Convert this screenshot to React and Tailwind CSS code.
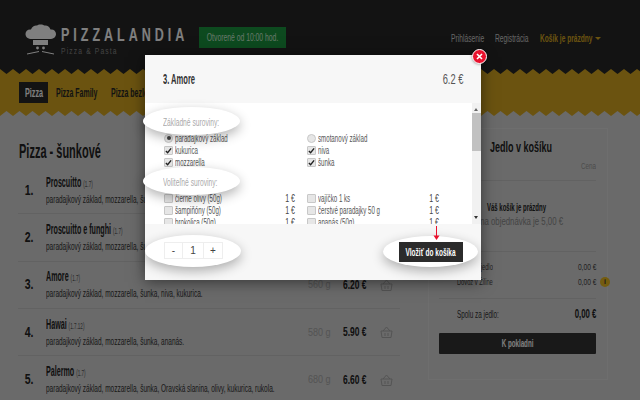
const sans = "font-['Liberation_Sans',Arial,sans-serif]";

const pizzas = [
  { n: "1.", name: "Proscuitto", al: "(1.7)", desc: "paradajkový základ, mozzarella, šunka.", weight: "480 g", price: "4.90 €" },
  { n: "2.", name: "Proscuitto e funghi", al: "(1.7)", desc: "paradajkový základ, mozzarella, šunka, šampiňóny.", weight: "520 g", price: "5.20 €" },
  { n: "3.", name: "Amore", al: "(1.7)", desc: "paradajkový základ, mozzarella, šunka, niva, kukurica.", weight: "560 g", price: "6.20 €" },
  { n: "4.", name: "Hawai", al: "(1.7.12)", desc: "paradajkový základ, mozzarella, šunka, ananás.", weight: "580 g", price: "5.90 €" },
  { n: "5.", name: "Palermo", al: "(1.7)", desc: "paradajkový základ, mozzarella, šunka, Oravská slanina, olivy, kukurica, rukola.", weight: "680 g", price: "6.60 €" },
];

function ChefLogo() {
  return (
    <svg width="31" height="32" viewBox="0 0 31 32" className="shrink-0">
      <path fill="#ffffff" d="M7 15c-4 0-6.500-2-6.500-5S3 5 6 5.500C7 2.500 10 1 12 1.500c1-1.500 6-1.500 7.500 0 2.500-.5 5 1 6 4 3-.5 5.500 1.500 5.500 4.500s-2.500 5-6.500 5z" />
      <path fill="#ffffff" d="M8 16h15v5H8z" />
      <circle cx="12.500" cy="24" r="1.400" fill="#ffffff" />
      <circle cx="18.500" cy="24" r="1.400" fill="#ffffff" />
      <path stroke="#ffffff" strokeWidth="1" fill="none" d="M2 30l12-2.500M29 30l-12-2.500" />
    </svg>
  );
}

function Basket() {
  return (
    <svg width="13" height="12" viewBox="0 0 13 12" fill="none" stroke="#a8a8a8" strokeWidth="1">
      <path d="M1 5h11l-1 6.500H2zM3 5l3.500-4L10 5M5 7v3M8 7v3" />
    </svg>
  );
}

function PizzaRow({ pizza, last }) {
  return (
    <div className={`flex h-[47.300px] items-center ${last ? "" : "border-b border-[#c4c4c4]"}`}>
      <div className="w-[28px] origin-left scale-x-[.75] pl-[9px] text-[14px] font-bold text-[#222]">{pizza.n}</div>
      <div className="w-[262px] shrink-0">
        <div className="origin-left scale-x-[.51] text-[14px] leading-[15px] font-bold whitespace-nowrap text-[#222]">
          {pizza.name} <span className="text-[9px] font-normal text-[#555]">{pizza.al}</span>
        </div>
        <div className="origin-left scale-x-[.59] text-[11px] leading-[14px] whitespace-nowrap text-[#333]">{pizza.desc}</div>
      </div>
      <div className="w-[35px] shrink-0 origin-left scale-x-[.9] text-[10px] text-[#a8a8a8]">{pizza.weight}</div>
      <div className="w-[37px] shrink-0 origin-left scale-x-[.65] text-[13px] font-bold whitespace-nowrap text-[#222]">{pizza.price}</div>
      <div className="w-[20px] shrink-0">
        <Basket />
      </div>
    </div>
  );
}

function CheckBox({ checked, round }) {
  return (
    <span className={`relative flex size-[9px] shrink-0 items-center justify-center border border-[#c8c8c8] bg-[#e6e6e6] ${round ? "rounded-full" : "rounded-[1px]"}`}>
      {checked === "dot" && <span className="size-[4px] rounded-full bg-[#444]" />}
      {checked === true && (
        <svg width="8" height="7" viewBox="0 0 8 7" fill="none" stroke="#222" strokeWidth="1.600">
          <path d="M1 4l2 2 4-5" />
        </svg>
      )}
    </span>
  );
}

function Option({ label, price, checked, round }) {
  return (
    <div className="flex h-[12px] items-center">
      <CheckBox checked={checked} round={round} />
      <span className="ml-[2px] min-w-0 flex-1 origin-left scale-x-[.56] text-[11px] whitespace-nowrap text-[#555]">{label}</span>
      {price && <span className="origin-right scale-x-[.7] text-[10px] text-[#444]">{price}</span>}
    </div>
  );
}

function Spot({ className }) {
  return <div className={`absolute rounded-[50%] bg-white shadow-[0_4px_12px_rgba(0,0,0,0.3)] ${className}`} />;
}

export default function App() {
  return (
    <div className={`relative h-[400px] w-[640px] overflow-hidden bg-[#d4d4d4] ${sans}`}>
      <header className="flex h-[69px] items-start bg-[#262626] pl-[25px]">
        <div className="mt-[24px] flex">
          <ChefLogo />
          <div className="ml-[5px] w-[125px] whitespace-nowrap">
            <div className="origin-left scale-x-[.66] text-[19px] leading-[22px] font-bold tracking-[6px] text-white">PIZZALANDIA</div>
            <div className="origin-left scale-x-[.75] text-[9px] leading-[10px] tracking-[1.500px] text-[#888]">Pizza &amp; Pasta</div>
          </div>
        </div>
        <div className="mt-[27px] ml-[13px] flex h-[21px] w-[87px] items-center justify-center bg-[#1a943e] text-[10px] whitespace-nowrap text-[#cdeed6]">
          <span className="scale-x-[.68]">Otvorené od 10:00 hod.</span>
        </div>
        <nav className="mt-[31px] ml-auto flex items-center gap-[12px] pr-[39px] text-[10px] whitespace-nowrap">
          <span className="w-[32px] origin-left scale-x-[.67] text-[#ccc]">Prihlásenie</span>
          <span className="w-[33px] origin-left scale-x-[.67] text-[#ccc]">Registrácia</span>
          <span className="w-[48px] origin-left scale-x-[.66] font-bold text-[#d6a620]">Košík je prázdny</span>
          <span className="ml-[-5px] size-0 border-x-[3px] border-t-[3px] border-x-transparent border-t-[#d6a620]" />
        </nav>
      </header>

      <div className="relative flex h-[47px] items-center bg-[#d6a620] pl-[19px] text-[12px] font-bold whitespace-nowrap text-[#262626]">
        <svg className="absolute top-0 left-0" width="640" height="5">
          <defs>
            <pattern id="zigTop" width="13" height="5" patternUnits="userSpaceOnUse">
              <path d="M0 0h13L6.500 5z" fill="#262626" />
            </pattern>
            <pattern id="zigBottom" width="13" height="5" patternUnits="userSpaceOnUse">
              <path d="M0 5h13L6.500 0z" fill="#d4d4d4" />
            </pattern>
          </defs>
          <rect width="640" height="5" fill="url(#zigTop)" />
        </svg>
        <svg className="absolute bottom-0 left-0" width="640" height="5">
          <rect width="640" height="5" fill="url(#zigBottom)" />
        </svg>
        <span className="flex h-[21px] w-[29px] items-center justify-center bg-[#262626] text-white">
          <span className="scale-x-[.6]">Pizza</span>
        </span>
        <span className="ml-[8px] w-[42px] origin-left scale-x-[.58]">Pizza Family</span>
        <span className="ml-[13px] w-[60px] origin-left scale-x-[.58]">Pizza bezlepková</span>
      </div>

      <main className="flex pl-[18px]">
        <section className="w-[382px]">
          <h1 className="mt-[24px] mb-[5px] origin-left translate-x-[1px] scale-x-[.55] text-[20px] leading-[22px] font-bold whitespace-nowrap text-[#222]">Pizza - šunkové</h1>
          {pizzas.map((p, i) => (
            <PizzaRow key={p.n} pizza={p} last={i === pizzas.length - 1} />
          ))}
        </section>

        <aside className="mt-[12px] ml-[28px] flex h-[252px] w-[180px] flex-col border border-[#dcdcdc] pr-[11px] pl-[10px] whitespace-nowrap">
          <div className="mt-[8px] origin-left translate-x-[51px] scale-x-[.6] text-[15px] leading-[20px] font-bold text-[#222]">Jedlo v košíku</div>
          <div className="mt-[3px] h-[21px] border-b border-[#c4c4c4] text-right text-[9px] leading-[12px] text-[#999]">
            <div className="origin-right scale-x-[.7]">Cena</div>
          </div>
          <div className="h-[71px] border-b border-[#c4c4c4] pt-[20px]">
            <div className="origin-left translate-x-[48px] scale-x-[.6] text-[10px] leading-[14px] font-bold text-[#222]">Váš košík je prázdny</div>
            <div className="origin-right -translate-x-[33px] scale-x-[.78] text-right text-[10px] leading-[14px] text-[#888]">Minimálna objednávka je 5,00 €</div>
          </div>
          <div className="mt-[7px] flex h-[16px] items-center justify-between pl-[18px] text-[9.500px] text-[#444]">
            <span className="origin-left scale-x-[.6]">Spolu za jedlo</span>
            <span className="origin-right scale-x-[.7]">0,00 €</span>
          </div>
          <div className="relative flex h-[15px] items-center justify-between pl-[18px] text-[9.500px] text-[#444]">
            <span className="origin-left scale-x-[.6]">Dovoz v Žiline</span>
            <span className="origin-right scale-x-[.7]">0,00 €</span>
            <span className="absolute top-[2px] right-[-14px] flex size-[10px] items-center justify-center rounded-full bg-[#e8b820] text-[7px] font-bold text-[#333]">i</span>
          </div>
          <div className="mt-[8px] flex h-[31px] items-center justify-between border-t border-[#c4c4c4] pl-[18px]">
            <span className="origin-left scale-x-[.58] text-[11px] text-[#333]">Spolu za jedlo:</span>
            <span className="origin-right scale-x-[.65] text-[12px] font-bold text-[#222]">0,00 €</span>
          </div>
          <div className="mt-[4px] flex h-[21px] items-center justify-center rounded-[1px] bg-[#333] text-[10px] font-bold text-white">
            <span className="scale-x-[.62]">K pokladni</span>
          </div>
        </aside>
      </main>

      <div className="absolute inset-0 bg-black/50" />

      <div className="absolute top-[55px] left-[145px] flex h-[225px] w-[336px] flex-col bg-white whitespace-nowrap shadow-[0_2px_14px_rgba(0,0,0,0.5)]">
        <div className="flex h-[48px] items-center justify-between bg-[#f7f7f7] px-[18px] text-[#555]">
          <span className="origin-left scale-x-[.54] text-[14px] font-bold text-[#333]">3. Amore</span>
          <span className="origin-right scale-x-[.62] text-[15px]">6.2 €</span>
        </div>

        <div className="relative flex h-[121px] overflow-hidden">
          <div className="flex-1 pt-[29px] pl-[19px]">
            <div className="grid w-[275px] grid-cols-[131px_132px] gap-x-[12px]">
              <Option round checked="dot" label="paradajkový základ" />
              <Option round label="smotanový základ" />
              <Option checked label="kukurica" />
              <Option checked label="niva" />
              <Option checked label="mozzarella" />
              <Option checked label="šunka" />
            </div>
            <div className="h-[24px]" />
            <div className="grid w-[275px] grid-cols-[131px_132px] gap-x-[12px]">
              <Option label="čierne olivy (50g)" price="1 €" />
              <Option label="vajíčko 1 ks" price="1 €" />
              <Option label="šampiňóny (50g)" price="1 €" />
              <Option label="čerstvé paradajky 50 g" price="1 €" />
              <Option label="brokolica (50g)" price="1 €" />
              <Option label="ananás (50g)" price="1 €" />
            </div>
          </div>
          <div className="relative w-[9px] bg-[#f1f1f1]">
            <span className="absolute top-[5px] left-[2px] size-0 border-x-[2.500px] border-b-[3px] border-x-transparent border-b-[#666]" />
            <div className="absolute top-[10px] left-0 h-[38px] w-full bg-[#c1c1c1]" />
            <span className="absolute bottom-[5px] left-[2px] size-0 border-x-[2.500px] border-t-[3px] border-x-transparent border-t-[#333]" />
          </div>
        </div>

        <div className="h-[56px] bg-[#f7f7f7]" />

        <Spot className="top-[52px] left-[-2px] h-[28px] w-[97px]" />
        <div className="absolute top-[60px] left-[18px] origin-left scale-x-[.67] text-[10px] text-[#aaa]">Základné suroviny:</div>
        <Spot className="top-[112px] left-[-2px] h-[28px] w-[97px]" />
        <div className="absolute top-[120px] left-[18px] origin-left scale-x-[.67] text-[10px] text-[#aaa]">Voliteľné suroviny:</div>

        <Spot className="top-[180px] left-0 h-[32px] w-[96px]" />
        <div className="absolute top-[187px] left-[19px] flex h-[17px] w-[59px] border border-[#eee] bg-white text-[10px] text-[#444]">
          <span className="flex w-[18px] items-center justify-center border-r border-[#eee]">-</span>
          <span className="flex flex-1 items-center justify-center border-r border-[#eee]">1</span>
          <span className="flex w-[18px] items-center justify-center">+</span>
        </div>

        <Spot className="top-[181px] left-[238px] h-[31px] w-[95px]" />
        <div className="absolute top-[187px] left-[254px] flex h-[20px] w-[64px] items-center justify-center bg-[#2b2b2b] text-[10px] font-bold text-white">
          <span className="scale-x-[.65]">Vložiť do košíka</span>
        </div>

        <svg className="absolute top-[171px] left-[288px]" width="7" height="15" viewBox="0 0 7 15" fill="#e8112d">
          <path d="M3 0h1v10h-1z" />
          <path d="M0.500 9.500h6L3.500 14z" />
        </svg>

        <div className="absolute top-[-6px] right-[-6px] flex size-[15px] items-center justify-center rounded-full border-[1.500px] border-white bg-[#e8112d] shadow-[0_0_3px_rgba(0,0,0,0.5)]">
          <svg width="7" height="7" viewBox="0 0 7 7" stroke="#fff" strokeWidth="1.600">
            <path d="M1 1l5 5M6 1l-5 5" />
          </svg>
        </div>
      </div>
    </div>
  );
}
